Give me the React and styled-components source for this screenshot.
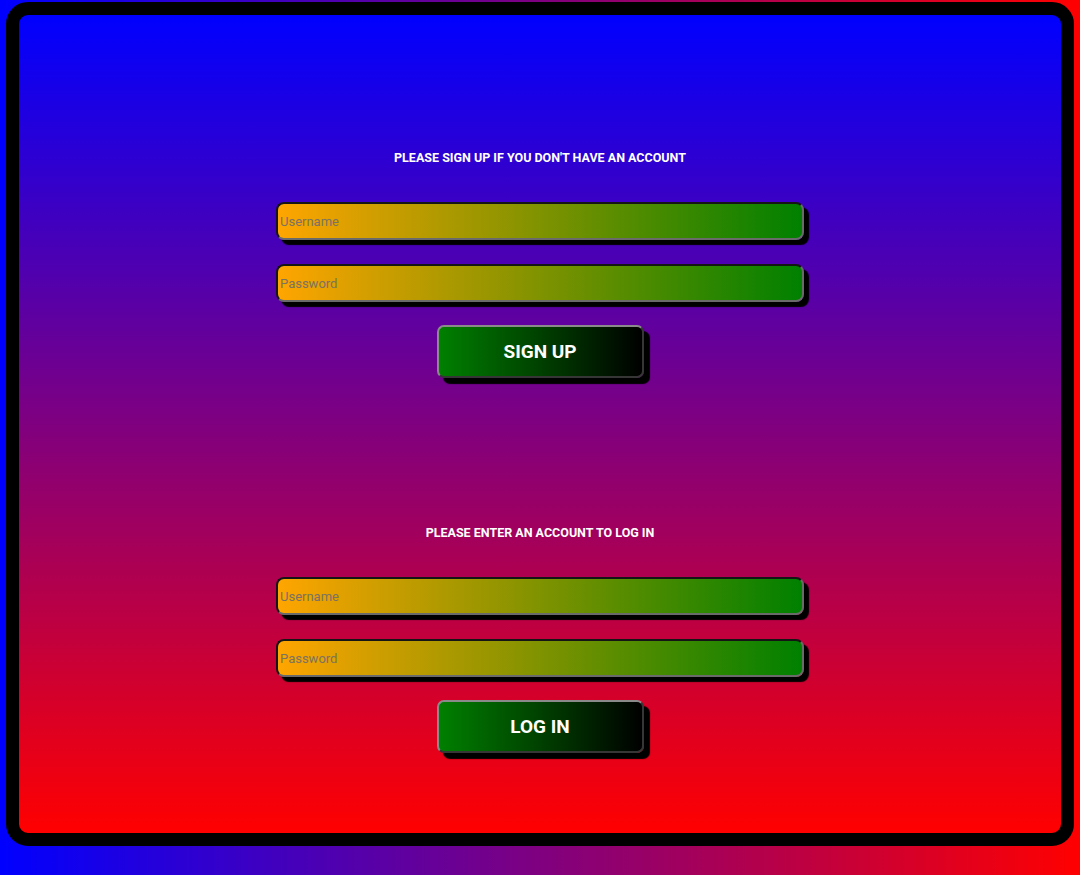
import React from "react";
import styled, { createGlobalStyle } from "styled-components";

const GlobalStyle = createGlobalStyle`
  html, body {
    margin: 0;
    padding: 0;
  }
  body {
    height: 875px;
    background: linear-gradient(to right, #0000ff, #ff0000);
    font-family: Roboto, "Liberation Sans", sans-serif;
    overflow: hidden;
  }
`;

const Frame = styled.div`
  box-sizing: border-box;
  width: 1068px;
  height: 844px;
  margin: 2px 0 0 6px;
  border: 13px solid #000;
  border-radius: 22px;
  background: linear-gradient(to bottom, #0000ff, #ff0000);
  display: flex;
  flex-direction: column;
  align-items: center;
  padding-top: 135px;
  gap: 147px;
`;

const Form = styled.form`
  display: flex;
  flex-direction: column;
  align-items: center;
`;

const Heading = styled.h2`
  margin: 0 0 37px;
  font-size: 12.5px;
  line-height: 15px;
  font-weight: 700;
  color: #fff;
  text-transform: uppercase;
`;

const Field = styled.input`
  box-sizing: border-box;
  width: 528px;
  height: 38px;
  margin-bottom: 24px;
  padding: 1px 2px;
  border: 2px inset #6a6a6a;
  border-radius: 8px;
  background: linear-gradient(to right, #ffa500, #008000);
  box-shadow: 5px 5px 1px #000;
  font-family: Roboto, "Liberation Sans", sans-serif;
  font-size: 13px;
  color: #222;
  outline: none;

  &::placeholder {
    color: #7a7262;
  }
`;

const Button = styled.button`
  box-sizing: border-box;
  width: 207px;
  height: 53px;
  margin-top: -1px;
  border: 2px outset #8a8a8a;
  border-radius: 7px;
  background: linear-gradient(to right, #008000, #000);
  box-shadow: 6px 6px 1px #000;
  color: #fff;
  font-family: Roboto, "Liberation Sans", sans-serif;
  font-size: 19px;
  font-weight: 700;
  cursor: pointer;
`;

function AccountForm({ title, action }) {
  return (
    <Form onSubmit={(e) => e.preventDefault()}>
      <Heading>{title}</Heading>
      <Field type="text" placeholder="Username" />
      <Field type="password" placeholder="Password" />
      <Button type="submit">{action}</Button>
    </Form>
  );
}

export default function App() {
  return (
    <>
      <GlobalStyle />
      <Frame>
        <AccountForm title="Please sign up if you don't have an account" action="SIGN UP" />
        <AccountForm title="Please enter an account to log in" action="LOG IN" />
      </Frame>
    </>
  );
}
